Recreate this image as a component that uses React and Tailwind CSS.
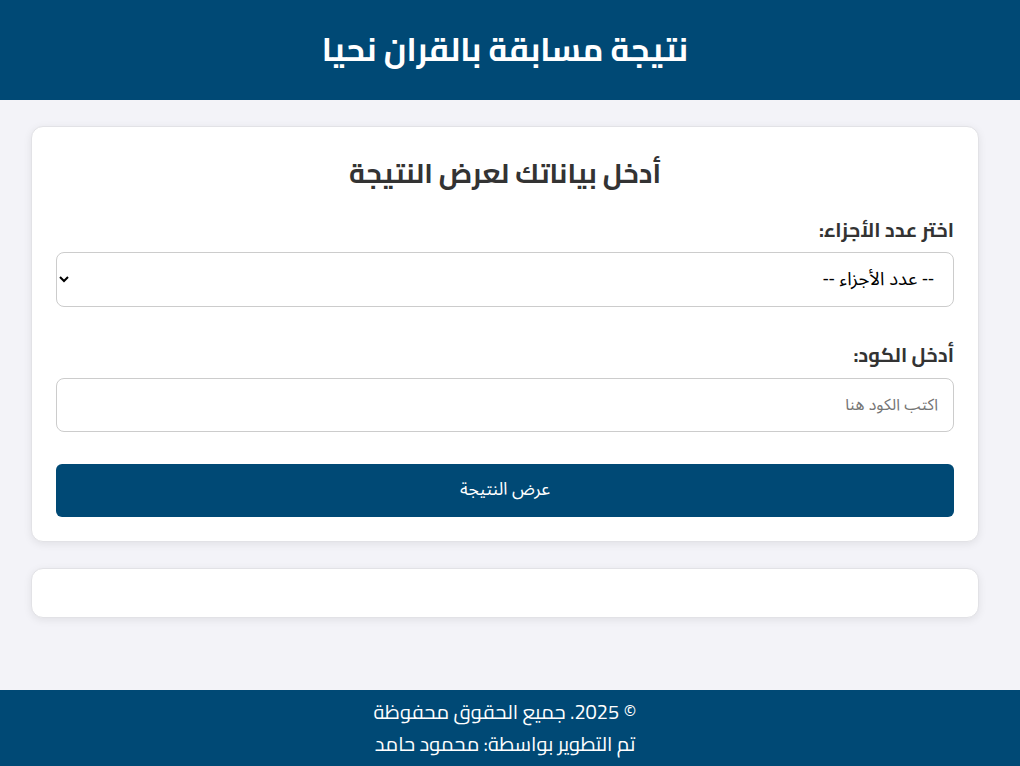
export default function App() {
  return (
    <div dir="rtl" className="min-h-screen flex flex-col bg-[#f3f3f8] font-['Cairo','Noto_Kufi_Arabic',sans-serif]">
      <header className="h-[100px] shrink-0 bg-[#004975] flex items-center justify-center pr-[10px]">
        <h1 className="text-white text-[32.5px] font-bold leading-none">نتيجة مسابقة بالقران نحيا</h1>
      </header>

      <main className="flex-1 pt-[26px] ml-[31px] mr-[41px]">
        <div className="bg-white rounded-xl border border-[#e2e2e6] shadow-[0_2px_8px_rgba(0,0,0,0.08)] p-[24px]">
          <h2 className="text-center text-[27.5px] font-bold leading-[44px] text-[#333]">أدخل بياناتك لعرض النتيجة</h2>

          <label className="block mt-[22px] text-[20px] font-bold leading-[26px] text-[#333]">اختر عدد الأجزاء:</label>
          <select className="mt-[9px] w-full h-[55px] px-[15px] border border-[#cccccc] rounded-lg bg-white text-[18.5px] text-black font-['Noto_Sans_Arabic',sans-serif]">
            <option>-- عدد الأجزاء --</option>
          </select>

          <label className="block mt-[35px] text-[20px] font-bold leading-[26px] text-[#333]">أدخل الكود:</label>
          <input
            type="text"
            placeholder="اكتب الكود هنا"
            className="mt-[10px] w-full h-[54px] px-[15px] border border-[#cccccc] rounded-lg bg-white text-[16px] placeholder:text-[#757575] font-['Noto_Sans_Arabic',sans-serif]"
          />

          <button className="mt-[32px] w-full h-[53px] bg-[#004975] text-white rounded-md text-[17.5px] font-['Noto_Sans_Arabic',sans-serif]">
            عرض النتيجة
          </button>
        </div>

        <div className="mt-[26px] h-[50px] bg-white rounded-xl border border-[#e2e2e6] shadow-[0_2px_8px_rgba(0,0,0,0.08)]"></div>
      </main>

      <footer className="h-[76px] shrink-0 bg-[#004975] text-white text-center pr-[10px] py-[6px] text-[20px] leading-[32px]">
        <p>© 2025. جميع الحقوق محفوظة</p>
        <p>تم التطوير بواسطة: محمود حامد</p>
      </footer>
    </div>
  );
}
